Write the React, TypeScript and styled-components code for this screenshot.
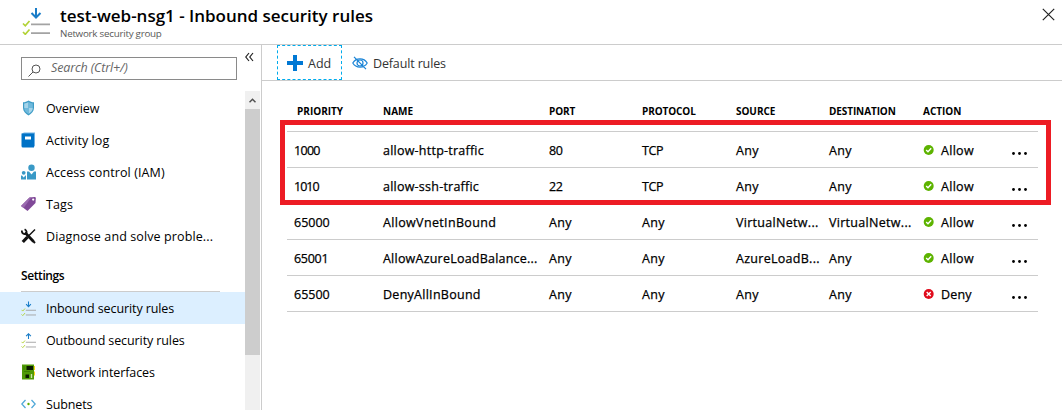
import React from 'react';
import styled, { createGlobalStyle } from 'styled-components';

const Global = createGlobalStyle`
  * { box-sizing: border-box; }
  body { margin: 0; background: #fff; overflow: hidden; }
  svg { display: block; flex: none; }
`;

const Blade = styled.div`
  width: 1062px;
  height: 410px;
  overflow: hidden;
  display: flex;
  flex-direction: column;
  background: #fff;
  color: #000;
  font-family: 'Open Sans', 'Noto Sans', sans-serif;
  font-size: 12.5px;
  white-space: nowrap;
`;
const Header = styled.header`
  display: flex;
  flex: none;
  height: 45px;
  padding: 7px 7px 0 22px;
  border-bottom: 1px solid #ccc;
`;
const Titles = styled.div`
  flex: 1;
  padding-left: 10px;
`;
const Title = styled.h1`
  margin: 0;
  font-size: 17px;
  line-height: 18px;
  font-weight: 600;
  letter-spacing: -0.01px;
`;
const Subtitle = styled.div`
  margin-top: 2px;
  font-size: 9.8px;
  line-height: 13px;
  letter-spacing: -0.25px;
  color: #595959;
`;
const CloseButton = styled.button`
  display: block;
  width: 13px;
  height: 13px;
  margin-top: 1px;
  padding: 0;
  border: 0;
  background: none;
`;
const Body = styled.div`
  display: flex;
  flex: 1;
  min-height: 0;
`;
const Sidebar = styled.nav`
  width: 262px;
  flex: none;
  display: flex;
  flex-direction: column;
  border-right: 1px solid #ccc;
`;
const SearchRow = styled.div`
  display: flex;
  flex: none;
  height: 46px;
  padding: 12px 0 0 21px;
`;
const SearchBox = styled.div`
  display: flex;
  align-items: center;
  width: 216px;
  height: 23px;
  padding-left: 6px;
  border: 1px solid #8a8a8a;
  color: #666;
  font-style: italic;
  font-size: 12.5px;

  svg {
    margin-top: 4px;
  }
`;
const SearchText = styled.span`
  margin: -2px 0 0 10px;
  letter-spacing: -0.14px;
`;
const Collapse = styled.div`
  margin: -5px 0 0 8px;
`;
const MenuArea = styled.div`
  display: flex;
  flex: 1;
  min-height: 0;
`;
const Menu = styled.div`
  width: 245px;
  padding-top: 1px;
  overflow: hidden;
`;
const MenuItem = styled.div<{ $active?: boolean; $track?: number }>`
  display: flex;
  align-items: center;
  height: 32px;
  padding-left: 21px;
  gap: 10px;
  background: ${(p) => (p.$active ? '#dcefff' : 'transparent')};
  letter-spacing: ${(p) => p.$track ?? 0}px;
`;
const Section = styled.div`
  height: 40px;
  width: 199px;
  margin-left: 21px;
  padding-top: 15px;
  line-height: 18px;
  font-size: 12px;
  font-weight: 600;
  letter-spacing: -0.4px;
  border-bottom: 1px solid #ccc;
`;
const Scrollbar = styled.div`
  width: 15px;
  background: #f0f0f0;
`;
const ScrollUp = styled.div`
  display: flex;
  align-items: center;
  justify-content: center;
  height: 18px;
`;
const Thumb = styled.div`
  height: 246px;
  background: #cdcdcd;
`;
const Main = styled.main`
  flex: 1;
`;
const Toolbar = styled.div`
  display: flex;
  height: 36px;
  padding-left: 15px;
  border-bottom: 1px solid #ccc;
  color: #333;
`;
const ToolButton = styled.div<{ $focused?: boolean; $gap: number; $track?: number }>`
  display: flex;
  align-items: center;
  height: 35px;
  width: ${(p) => (p.$focused ? '65px' : 'auto')};
  padding-left: ${(p) => (p.$focused ? 9 : 10)}px;
  border: ${(p) => (p.$focused ? '1px dashed #00abec' : '0')};
  gap: ${(p) => p.$gap}px;
  letter-spacing: ${(p) => p.$track ?? 0}px;
`;
const ToolLabel = styled.span`
  padding-top: 2px;
`;
const Grid = styled.div`
  position: relative;
  width: 751px;
  margin: 22px 0 0 25px;
`;
const columns = '96px 166px 93px 94px 93px 94px 88px 20px';
const HeadRow = styled.div`
  display: grid;
  grid-template-columns: ${columns};
  height: 29px;
  line-height: 17px;
  border-bottom: 1px solid #ccc;
  font-size: 10px;
  font-weight: 700;
`;
const HeadCell = styled.div<{ $indent?: number; $track: number }>`
  padding-left: ${(p) => p.$indent ?? 0}px;
  letter-spacing: ${(p) => p.$track}px;
`;
const Row = styled.div`
  display: grid;
  grid-template-columns: ${columns};
  align-items: center;
  height: 36px;
  border-bottom: 1px solid #ccc;
  -webkit-text-stroke: 0.25px #000;
`;
const Cell = styled.div<{ $indent?: number; $track?: number }>`
  display: flex;
  align-items: center;
  padding-top: 2px;
  padding-left: ${(p) => p.$indent ?? 0}px;
  gap: 7px;
  letter-spacing: ${(p) => p.$track ?? 0}px;
`;
const StatusMark = styled.span`
  margin-top: -1px;
`;
const MoreButton = styled.div`
  padding: 7px 0 0 1px;
`;
const Highlight = styled.div`
  position: absolute;
  left: -7px;
  top: 17px;
  width: 771px;
  height: 85px;
  border: 5px solid #ed1c24;
  pointer-events: none;
`;

const RulesIcon = ({ size, up }: { size: number; up?: boolean }) => (
  <svg width={size} height={size} viewBox="0 0 28 28" fill="none">
    <path
      d={up ? 'M14 11V1.5M9.5 6 14 1.5 18.5 6' : 'M14 1v9.5M9.5 6 14 10.5 18.5 6'}
      stroke="#1a7dc8"
      strokeWidth="2"
    />
    <path d="M9 17.3h19M9 26.100h19" stroke="#a3a3a3" strokeWidth="1.7" />
    <path d="m1 16.5 2.3 2.3L7.5 14M1 25l2.3 2.3L7.5 22.500" stroke="#b2d235" strokeWidth="1.7" />
  </svg>
);
const ShieldIcon = () => (
  <svg width="15" height="16" viewBox="0 0 15 16">
    <path d="M7.5.5C9.3 1.7 11 2.200 13 2.300V8c0 3.300-2.500 5.800-5.500 7.500C4.500 13.800 2 11.300 2 8V2.300C4 2.200 5.700 1.700 7.500.5Z" fill="#3e9cc6" />
    <path d="M7.500 2v6H3.200V3.400c1.600-.1 3-.6 4.300-1.400ZM7.500 8h4.300c0 2.700-1.900 4.600-4.300 6Z" fill="#a5d4ea" />
    <path d="M7.500 2c1.300.8 2.700 1.300 4.300 1.400V8H7.500ZM3.200 8h4.300v6C5.100 12.600 3.200 10.700 3.200 8Z" fill="#6fb9dc" />
  </svg>
);
const BookIcon = () => (
  <svg width="15" height="16" viewBox="0 0 15 16">
    <path d="M1 1.500 3 .5h11V14l-1 .8Z" fill="#6fb1e4" />
    <path d="M.5 1.500H13v14H2a1.500 1.500 0 0 1-1.500-1.500Z" fill="#0072c6" />
    <path d="M4 4.500h6v3H4Z" fill="#fff" />
  </svg>
);
const PeopleIcon = () => (
  <svg width="15" height="16" viewBox="0 0 15 16" fill="#3999c6">
    <circle cx="10.500" cy="3.700" r="3.200" />
    <path d="M6 7.500h2l2.500 3L13 7.500h2v8H6Z" />
    <circle cx="2.700" cy="8.800" r="1.900" />
    <path d="M0 11.500h1l1.700 2 1.700-2H5v4H0Z" />
  </svg>
);
const TagIcon = () => (
  <svg width="15" height="16" viewBox="0 0 15 16">
    <path d="M8.500 1.500 13.500 1c.8 0 1.300.5 1.300 1.300L14.500 7l-8 8L0 10Z" fill="#804998" />
    <path d="M8.500 1.500 10.500 1.300 2.500 12 0 10Z" fill="#9b6bb0" />
    <circle cx="12.200" cy="3.600" r="1.100" fill="#fff" />
  </svg>
);
const ToolsIcon = () => (
  <svg width="15" height="16" viewBox="0 0 15 16" fill="none" stroke="#111">
    <path d="m4 4.500 8.500 9" strokeWidth="2.700" />
    <path d="M.9 2.500c-.3 3 2 4 4 3.300 1.200-1.300.8-3.600-1.300-4.600" strokeWidth="1.800" />
    <path d="m14 1.500-6 6" strokeWidth="1.400" />
    <path d="m6.500 9-4.700 5" strokeWidth="3.200" />
    <path d="M10.500 11.500 14 15" strokeWidth="2" />
  </svg>
);
const BoardIcon = () => (
  <svg width="15" height="16" viewBox="0 0 15 16">
    <path d="M12 2h2v4h-2ZM12 7.500h2v4h-2Z" fill="#fcd116" />
    <path d="M1 .5h12v15H1Z" fill="#4f9a06" />
    <path d="M5.500 2H12v4H5.500ZM4.500 10.500H8v3.500H4.500Z" fill="#0b1a00" />
    <path d="M3 2v4M3 7.500h6" stroke="#3b7d00" />
    <path d="M9.800 10h1.400v4H9.800Z" fill="#cfe8a8" />
  </svg>
);
const SubnetIcon = () => (
  <svg width="15" height="16" viewBox="0 0 15 16" fill="none">
    <path d="M4.500 4 .8 8l3.700 4M10.500 4l3.700 4-3.700 4" stroke="#4fa8d8" strokeWidth="1.300" />
    <circle cx="7.500" cy="8" r="1.200" fill="#5eae00" />
  </svg>
);
const StatusIcon = ({ ok }: { ok: boolean }) => (
  <svg width="11" height="10" viewBox="0 0 11 10">
    <circle cx="5.700" cy="5" r="5" fill={ok ? '#5db300' : '#e00b1c'} />
    <path d={ok ? 'M3.200 4.900 5 6.800 8.200 3.200' : 'm3.700 3 4 4m0-4-4 4'} fill="none" stroke="#fff" strokeWidth="1.400" />
  </svg>
);
const MoreIcon = () => (
  <svg width="15" height="3" viewBox="0 0 15 3">
    <circle cx="1.500" cy="1.500" r="1.400" />
    <circle cx="7.500" cy="1.500" r="1.400" />
    <circle cx="13.500" cy="1.500" r="1.400" />
  </svg>
);

const resources = [
  { label: 'Overview', icon: <ShieldIcon />, track: -0.12 },
  { label: 'Activity log', icon: <BookIcon />, track: 0.08 },
  { label: 'Access control (IAM)', icon: <PeopleIcon />, track: 0.1 },
  { label: 'Tags', icon: <TagIcon />, track: 0.1 },
  { label: 'Diagnose and solve proble...', icon: <ToolsIcon />, track: 0.11 },
];
const settings = [
  { label: 'Inbound security rules', icon: <RulesIcon size={15} />, active: true, track: -0.1 },
  { label: 'Outbound security rules', icon: <RulesIcon size={15} up />, track: -0.1 },
  { label: 'Network interfaces', icon: <BoardIcon />, track: -0.09 },
  { label: 'Subnets', icon: <SubnetIcon />, track: -0.12 },
];
const heads = [
  { label: 'PRIORITY', track: 0 },
  { label: 'NAME', track: 0 },
  { label: 'PORT', track: -0.15 },
  { label: 'PROTOCOL', track: -0.1 },
  { label: 'SOURCE', track: -0.05 },
  { label: 'DESTINATION', track: -0.1 },
  { label: 'ACTION', track: 0 },
];
const rules = [
  ['1000', 'allow-http-traffic', '80', 'TCP', 'Any', 'Any', 'Allow'],
  ['1010', 'allow-ssh-traffic', '22', 'TCP', 'Any', 'Any', 'Allow'],
  ['65000', 'AllowVnetInBound', 'Any', 'Any', 'VirtualNetw...', 'VirtualNetw...', 'Allow'],
  ['65001', 'AllowAzureLoadBalance...', 'Any', 'Any', 'AzureLoadB...', 'Any', 'Allow'],
  ['65500', 'DenyAllInBound', 'Any', 'Any', 'Any', 'Any', 'Deny'],
];
const tracking: Record<string, number> = {
  '1000': -0.7,
  '1010': -1,
  '65001': -0.3,
  '80': -0.4,
  '22': -0.4,
  TCP: -0.4,
  'allow-http-traffic': 0.23,
  'allow-ssh-traffic': 0.23,
  AllowVnetInBound: 0.34,
  'AllowAzureLoadBalance...': 0.22,
  DenyAllInBound: 0.27,
  'VirtualNetw...': 0.3,
  'AzureLoadB...': 0.28,
  Any: 0.3,
  Allow: 0.3,
  Deny: 0.2,
};

export default function App() {
  return (
    <Blade>
      <Global />
      <Header>
        <RulesIcon size={28} />
        <Titles>
          <Title>test-web-nsg1 - Inbound security rules</Title>
          <Subtitle>Network security group</Subtitle>
        </Titles>
        <CloseButton aria-label="Close">
          <svg width="13" height="13" viewBox="0 0 13 13" stroke="#222" strokeWidth="1.200">
            <path d="m.8.8 11.400 11.400M12.200.8.8 12.200" />
          </svg>
        </CloseButton>
      </Header>
      <Body>
        <Sidebar>
          <SearchRow>
            <SearchBox>
              <svg width="13" height="13" viewBox="0 0 13 13" fill="none" stroke="#555">
                <circle cx="8" cy="5" r="4" />
                <path d="M5 8 .5 12.500" />
              </svg>
              <SearchText>Search (Ctrl+/)</SearchText>
            </SearchBox>
            <Collapse>
              <svg width="9" height="10" viewBox="0 0 9 10" fill="none" stroke="#222" strokeWidth="1.200">
                <path d="M4 1 .8 5 4 9M8 1 4.800 5 8 9" />
              </svg>
            </Collapse>
          </SearchRow>
          <MenuArea>
            <Menu>
              {resources.map((r) => (
                <MenuItem key={r.label} $track={r.track}>
                  {r.icon}
                  {r.label}
                </MenuItem>
              ))}
              <Section>Settings</Section>
              {settings.map((r) => (
                <MenuItem key={r.label} $active={r.active} $track={r.track}>
                  {r.icon}
                  {r.label}
                </MenuItem>
              ))}
            </Menu>
            <Scrollbar>
              <ScrollUp>
                <svg width="7" height="5" viewBox="0 0 7 5" fill="none" stroke="#505050" strokeWidth="1.500">
                  <path d="M.5 4.200 3.500 1.200 6.500 4.200" />
                </svg>
              </ScrollUp>
              <Thumb />
            </Scrollbar>
          </MenuArea>
        </Sidebar>
        <Main>
          <Toolbar>
            <ToolButton $focused $gap={5}>
              <svg width="16" height="16" viewBox="0 0 16 16" fill="#0078d4">
                <path d="M6 0h4v6h6v4h-6v6H6v-6H0V6h6Z" />
              </svg>
              <ToolLabel>Add</ToolLabel>
            </ToolButton>
            <ToolButton $gap={5} $track={-0.14}>
              <svg width="16" height="14" viewBox="0 0 16 14" fill="none" stroke="#1a84d6" strokeWidth="1.200">
                <path d="M.8 7C4 1.500 12 1.500 15.200 7 12 12.500 4 12.500.8 7ZM2 .8l12 12.400" />
                <circle cx="8" cy="7" r="3" />
              </svg>
              <ToolLabel>Default rules</ToolLabel>
            </ToolButton>
          </Toolbar>
          <Grid>
            <HeadRow>
              {heads.map((h, i) => (
                <HeadCell key={h.label} $indent={i === 0 ? 10 : 0} $track={h.track}>
                  {h.label}
                </HeadCell>
              ))}
            </HeadRow>
            {rules.map((rule) => (
              <Row key={rule[0]}>
                {rule.map((value, i) => (
                  <Cell key={i} $indent={i === 0 ? 7 : 0} $track={tracking[value]}>
                    {i === 6 && (
                      <StatusMark>
                        <StatusIcon ok={value === 'Allow'} />
                      </StatusMark>
                    )}
                    {value}
                  </Cell>
                ))}
                <MoreButton>
                  <MoreIcon />
                </MoreButton>
              </Row>
            ))}
            <Highlight />
          </Grid>
        </Main>
      </Body>
    </Blade>
  );
}
